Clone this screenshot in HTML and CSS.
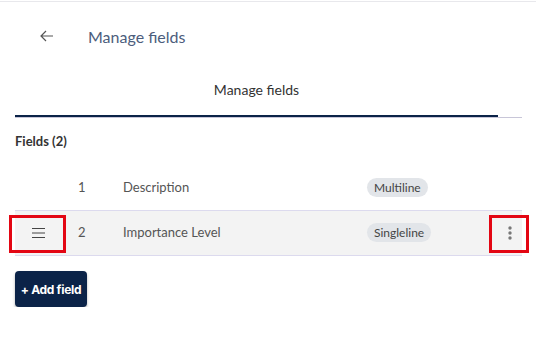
FILE: index.html
```html
<!DOCTYPE html>
<html>
<head>
    <title>Manage fields</title>
    <link rel="stylesheet" href="styles.css">
</head>
<body>
    <div class="page">
        <div class="header">
            <button class="back" aria-label="Back">
                <svg width="14" height="12" viewBox="0 0 14 12" fill="none" stroke="#555" stroke-width="1.2">
                    <path d="M13 6H1.2M6 1L1 6l5 5"/>
                </svg>
            </button>
            <h1 class="title">Manage fields</h1>
        </div>

        <div class="tabs">
            <div class="tab active">Manage fields</div>
        </div>

        <div class="section-title">Fields (2)</div>

        <div class="field-list">
            <div class="field-row">
                <div class="handle"></div>
                <div class="num">1</div>
                <div class="name">Description</div>
                <div class="type"><span class="chip">Multiline</span></div>
                <div class="menu"></div>
            </div>
            <div class="field-row hovered">
                <div class="handle">
                    <svg width="13" height="10" viewBox="0 0 13 10" stroke="#444" stroke-width="1">
                        <path d="M0 0.5H13M0 5H13M0 9.5H13"/>
                    </svg>
                </div>
                <div class="num">2</div>
                <div class="name">Importance Level</div>
                <div class="type"><span class="chip">Singleline</span></div>
                <div class="menu">
                    <svg width="4" height="14" viewBox="0 0 4 14" fill="#777">
                        <circle cx="2" cy="2" r="1.7"/>
                        <circle cx="2" cy="7" r="1.7"/>
                        <circle cx="2" cy="12" r="1.7"/>
                    </svg>
                </div>
                <div class="mark mark-left"></div>
                <div class="mark mark-right"></div>
            </div>
        </div>

        <button class="add-btn">+ Add field</button>
    </div>
</body>
</html>
```

FILE: styles.css
```css
:root {
    --navy: #0b2348;
    --text: #333;
    --muted: #555;
    --line: #dcdaee;
}

body {
    margin: 0;
    padding-top: 1px;
    background: #fff;
    font-family: Lato, "Noto Sans", sans-serif;
    color: var(--text);
}

.page {
    border-top: 1px solid #e8e8ec;
    width: 507px;
    padding: 0 14px 0 15px;
}

.header {
    height: 68px;
    display: flex;
    align-items: center;
    padding-left: 25px;
}

.back {
    display: flex;
    padding: 0;
    border: 0;
    background: transparent;
    cursor: pointer;
}

.title {
    margin: 0 0 0 34px;
    font-size: 16px;
    font-weight: 400;
    color: #4c5d7c;
}

.tabs {
    display: flex;
    border-bottom: 1px solid #c8c6d8;
}

.tab {
    width: 483px;
    padding: 12px 0 17px;
    line-height: 16px;
    font-size: 14px;
    text-align: center;
    color: var(--text);
}

.tab.active {
    border-bottom: 2px solid var(--navy);
}

.section-title {
    margin-top: 15px;
    line-height: 16px;
    font-size: 13px;
    font-weight: 700;
    color: #333;
}

.field-list {
    margin-top: 17px;
}

.field-row {
    position: relative;
    display: grid;
    grid-template-columns: 52px 56px 1fr 122px 33px;
    align-items: center;
    height: 44px;
    border-bottom: 1px solid var(--line);
    font-size: 13px;
    color: var(--muted);
}

.field-row.hovered {
    background: #f3f3f3;
}

.handle {
    display: flex;
    padding-left: 17px;
}

.num {
    padding: 0 0 3px 11px;
}

.name {
    padding-bottom: 3px;
}

.type {
    padding-bottom: 1px;
}

.chip {
    display: inline-block;
    padding: 2px 7px;
    line-height: 15px;
    border-radius: 10px;
    background: #e2e5e9;
    font-size: 12px;
    color: #444;
}

.menu {
    display: flex;
    padding-left: 19px;
}

.mark {
    position: absolute;
    top: 4px;
    height: 32px;
    border: 3px solid #e30613;
}

.mark-left {
    left: -6px;
    width: 51px;
}

.mark-right {
    left: 474px;
    width: 34px;
}

.add-btn {
    margin-top: 15px;
    width: 72px;
    height: 36px;
    padding: 0;
    border: 0;
    border-radius: 4px;
    background: var(--navy);
    box-shadow: 0 2px 3px rgba(0, 0, 0, 0.3);
    font-family: Inter, "Liberation Sans", sans-serif;
    font-size: 12px;
    font-weight: 700;
    letter-spacing: -0.3px;
    color: #fff;
    cursor: pointer;
}
```
